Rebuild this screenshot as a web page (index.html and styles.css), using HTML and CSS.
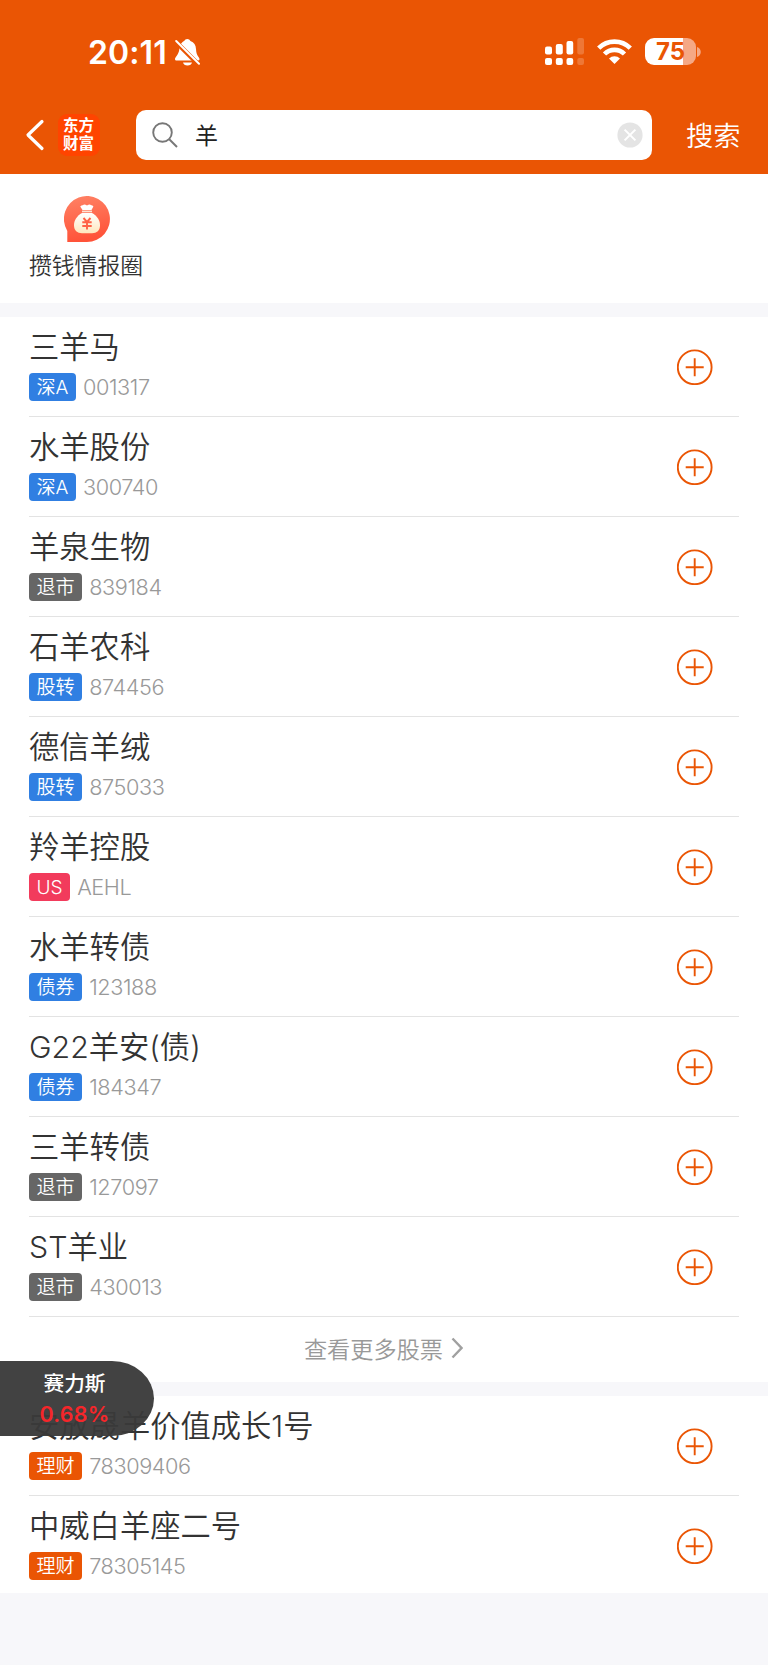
FILE: index.html
```html
<!DOCTYPE html>
<html lang="zh-CN">
<head>
<meta charset="utf-8">
<title>搜索</title>
<link rel="stylesheet" href="styles.css">
</head>
<body>
<svg class="defs" width="0" height="0">
  <symbol id="plus" viewBox="0 0 36 36"><circle cx="17.700" cy="18.300" r="16.900" fill="none" stroke="#ea5504" stroke-width="1.900"/><path d="M17.700 9.300v18M8.700 18.300h18" fill="none" stroke="#ea5504" stroke-width="1.900"/></symbol>
</svg>
<header class="header">
  <div class="status">
    <span class="time">20:11</span>
    <svg class="bell" width="25" height="28" viewBox="0 0 25 28"><path fill="#fff" d="M5 6.500C6.500 3.900 7.700 2.500 9.200 2c.6-1.300 1.700-2 3.100-2s2.500.7 3.100 2c3.700 1.300 5.400 4 5.600 8 .2 3.500.8 5.600 2.500 8 .8 1 1.200 1.900.9 2.800-.2.600-.8.700-1.600.700H1.800c-1.200 0-1.800-.7-1.800-1.600 0-2 3.800-4.500 4.300-9.500 0-1.600 0-2.800.700-3.900zM8 23.500h9c-.5 1.900-2 3-4.500 3s-4-1.100-4.500-3z"/><path d="M-.5 1.500 24.500 26.500" stroke="#ea5504" stroke-width="4.600"/><path d="M1.200 2 24 24.800" stroke="#fff" stroke-width="2" stroke-linecap="round"/></svg>
    <div class="indicators">
      <svg width="40" height="28" viewBox="0 0 40 28"><g fill="#fff"><rect y="8.500" width="7" height="8" rx="2"/><rect x="10.800" y="6" width="7" height="10.500" rx="2"/><rect x="21.500" y="3" width="6.700" height="13.500" rx="2"/><rect y="20" width="7" height="7" rx="2"/><rect x="10.800" y="20" width="7" height="7" rx="2"/><rect x="21.500" y="20" width="6.700" height="7" rx="2"/><g opacity=".2"><rect x="32.300" width="6.700" height="16.500" rx="2"/><rect x="32.300" y="20" width="6.700" height="7" rx="2"/></g></g></svg>
      <svg class="wifi" width="35" height="25" viewBox="0 0 35 25"><g fill="none" stroke="#fff" stroke-width="4.600"><path d="M1.700 9.200a22.300 22.300 0 0 1 31.600 0"/><path d="M7.500 15a14.100 14.100 0 0 1 20 0"/></g><path fill="#fff" d="M17.500 25 12 19.400a7.800 7.800 0 0 1 11 0z"/></svg>
      <div class="battery">75</div><svg class="cap" width="4" height="10" viewBox="0 0 4 10"><path fill="#f5a885" d="M0 0c5 1.500 5 8.500 0 10z"/></svg>
    </div>
  </div>
  <div class="searchbar">
    <svg class="back" width="20" height="32" viewBox="0 0 20 32"><path d="M17 2.500 3 16 17 29.500" fill="none" stroke="#fff" stroke-width="3.200" stroke-linecap="round" stroke-linejoin="round"/></svg>
    <div class="logo"><span>东方</span><span>财富</span></div>
    <div class="field">
      <svg class="glass" width="26" height="26" viewBox="0 0 26 26"><g fill="none" stroke="#777" stroke-width="1.900"><circle cx="10.500" cy="10.500" r="9.300"/><path d="m17 17 8 8"/></g></svg>
      <span class="query">羊</span>
      <svg class="clear" width="26" height="26" viewBox="0 0 26 26"><circle cx="13" cy="13" r="12.600" fill="#e4e4e4"/><path d="m7.600 7.600 10.800 10.800m0-10.800L7.600 18.400" stroke="#fff" stroke-width="2"/></svg>
    </div>
    <span class="go">搜索</span>
  </div>
</header>
<section class="circle">
  <div class="circle-item">
    <svg width="46" height="46" viewBox="0 0 46 46"><defs><linearGradient id="pin" x2=".2" y2="1"><stop stop-color="#ff8366"/><stop offset="1" stop-color="#ff5339"/></linearGradient><linearGradient id="bag" x2="0" y2="1"><stop stop-color="#fff"/><stop offset="1" stop-color="#ffe7be"/></linearGradient></defs><path fill="url(#pin)" d="M3.300 46V35A23 23 0 1 1 23 46z"/><path fill="#fff" d="M18.500 14 16.200 10.500c1-.8 1.700-1.300 2.600-1.300 1.200-1.200 2.500-.6 4.200.2 1.700-.8 3-1.400 4.200-.2.900 0 1.600.5 2.200 1.300L27.500 14z"/><rect x="18" y="14.600" width="10" height="1.700" fill="#ffe3d4"/><path fill="url(#bag)" d="M18 17h10c4.800 2.800 8 6.800 8 12.300 0 5.200-3.200 7.900-8 7.900H18c-4.800 0-8-2.700-8-7.900C10 23.800 13.200 19.800 18 17z"/><path d="m19.500 22 3.500 4 3.500-4M18.300 26.300h9.400M18.300 30h9.400M23 26v7.500" fill="none" stroke="#ff6146" stroke-width="1.900"/></svg>
    <span>攒钱情报圈</span>
  </div>
</section>
<main>
<section class="list">
  <article class="row"><div class="info"><h2>三羊马</h2><p><b class="tag">深A</b><span class="code">001317</span></p></div><svg class="add"><use href="#plus"/></svg></article>
  <article class="row"><div class="info"><h2>水羊股份</h2><p><b class="tag">深A</b><span class="code">300740</span></p></div><svg class="add"><use href="#plus"/></svg></article>
  <article class="row"><div class="info"><h2>羊泉生物</h2><p><b class="tag gray">退市</b><span class="code">839184</span></p></div><svg class="add"><use href="#plus"/></svg></article>
  <article class="row"><div class="info"><h2>石羊农科</h2><p><b class="tag">股转</b><span class="code">874456</span></p></div><svg class="add"><use href="#plus"/></svg></article>
  <article class="row"><div class="info"><h2>德信羊绒</h2><p><b class="tag">股转</b><span class="code">875033</span></p></div><svg class="add"><use href="#plus"/></svg></article>
  <article class="row"><div class="info"><h2>羚羊控股</h2><p><b class="tag red">US</b><span class="code">AEHL</span></p></div><svg class="add"><use href="#plus"/></svg></article>
  <article class="row"><div class="info"><h2>水羊转债</h2><p><b class="tag">债券</b><span class="code">123188</span></p></div><svg class="add"><use href="#plus"/></svg></article>
  <article class="row"><div class="info"><h2>G22羊安(债)</h2><p><b class="tag">债券</b><span class="code">184347</span></p></div><svg class="add"><use href="#plus"/></svg></article>
  <article class="row"><div class="info"><h2>三羊转债</h2><p><b class="tag gray">退市</b><span class="code">127097</span></p></div><svg class="add"><use href="#plus"/></svg></article>
  <article class="row"><div class="info"><h2>ST羊业</h2><p><b class="tag gray">退市</b><span class="code">430013</span></p></div><svg class="add"><use href="#plus"/></svg></article>
  <div class="more"><span>查看更多股票</span><svg width="12" height="22" viewBox="0 0 12 22"><path d="m1.500 1.500 9 9.500-9 9.500" fill="none" stroke="#a0a0a0" stroke-width="2.400"/></svg></div>
</section>
<section class="list funds">
  <article class="row"><div class="info"><h2>安放晟羊价值成长1号</h2><p><b class="tag orange">理财</b><span class="code">78309406</span></p></div><svg class="add"><use href="#plus"/></svg></article>
  <article class="row last"><div class="info"><h2>中威白羊座二号</h2><p><b class="tag orange">理财</b><span class="code">78305145</span></p></div><svg class="add"><use href="#plus"/></svg></article>
</section>
</main>
<aside class="ticker"><span class="ticker-name">赛力斯</span><span class="ticker-change">0.68%</span></aside>
</body>
</html>
```
FILE: styles.css
```css
* { box-sizing: border-box; }
body {
  margin: 0;
  height: 1665px;
  position: relative;
  background: #f7f7fa;
  color: #333;
  font-family: Inter, "Noto Sans CJK SC", sans-serif;
  overflow: hidden;
}
.defs { display: block; }
.header { height: 174px; background: #ea5504; color: #fff; }
.status { height: 110px; padding: 38px 67px 0 88px; display: flex; align-items: flex-start; }
.time { width: 87px; font-size: 32px; line-height: 30px; font-weight: 600; letter-spacing: 0.1px; white-space: nowrap; }
.bell { margin-top: 1px; }
.indicators { margin-left: auto; display: flex; align-items: flex-start; }
.wifi { margin: 1px 13px 0 12px; }
.battery {
  width: 51px; height: 27px; border-radius: 9px;
  background: linear-gradient(90deg, #fff 75%, #f5a885 75%);
  color: #ea5504; font-size: 24px; line-height: 28px; font-weight: 700; text-align: center;
}
.cap { margin: 9px 0 0 1px; }
.searchbar { height: 50px; display: flex; align-items: center; }
.back { margin-left: 25px; }
.logo {
  width: 42px; height: 42px; margin: 0 36px 0 12.500px; padding-top: 2px;
  border-radius: 9px; background: #ff4400;
  display: flex; flex-direction: column; align-items: center;
  font: 700 15.500px/17.500px "Noto Sans CJK SC", sans-serif;
}
.field { width: 516px; height: 50px; background: #fff; border-radius: 10px; display: flex; align-items: center; padding: 0 9px 0 16px; }
.query { margin-left: 17.500px; padding-top: 1px; color: #222; font-size: 23px; line-height: 30px; }
.clear { margin-left: auto; }
.go { margin-left: 34.500px; padding-top: 3px; font-size: 27.300px; line-height: 36px; white-space: nowrap; font-weight: 350; }
.circle { height: 129px; background: #fff; padding: 22px 0 0 29px; margin-bottom: 14px; }
.circle-item { width: 115px; display: flex; flex-direction: column; align-items: center; }
.circle-item span { margin: 8px 1px 0 0; font-size: 22.800px; line-height: 32px; white-space: nowrap; font-weight: 350; }
.list { background: #fff; }
.row {
  height: 100px; margin: 0 29px; padding: 13px 26px 0 0;
  border-bottom: 1px solid #e3e3e3;
  display: flex; justify-content: space-between; align-items: flex-start;
}
.info h2 { margin: 0; font-size: 30.300px; line-height: 34px; font-weight: 350; white-space: nowrap; }
.info p { margin: 9px 0 0; display: flex; align-items: center; gap: 7px; height: 28px; }
.tag {
  height: 28px; padding: 0 7.500px; border-radius: 4px;
  background: #307fe2; color: #fff; font-size: 19.100px; line-height: 28px; font-weight: 350;
}
.gray { background: #666; }
.red { background: #f23b5c; }
.orange { background: #ea5504; }
.code { color: #999; font-size: 21.700px; line-height: 28px; font-weight: 350; letter-spacing: -0.400px; }
.add { width: 36px; height: 36px; margin-top: 19px; flex: none; }
.more { height: 65px; padding: 0 1px 3px 0; display: flex; justify-content: center; align-items: center; gap: 8px; color: #999; font-size: 23.200px; font-weight: 350; }
.funds { margin-top: 14px; }
.last { height: 97px; border-bottom: 0; }
.ticker {
  position: absolute; left: 0; top: 1361px; width: 154px; height: 75px;
  border-radius: 0 42px 42px 0 / 0 37.500px 37.500px 0; background: rgba(58, 58, 58, .955);
  padding: 8px 5px 0 0; display: flex; flex-direction: column; align-items: center;
  color: #fff; font-size: 20.700px; line-height: 30px; font-weight: 500;
}
.ticker-change { color: #f5262a; font-size: 21.500px; font-weight: 600; letter-spacing: .2px; }
```
